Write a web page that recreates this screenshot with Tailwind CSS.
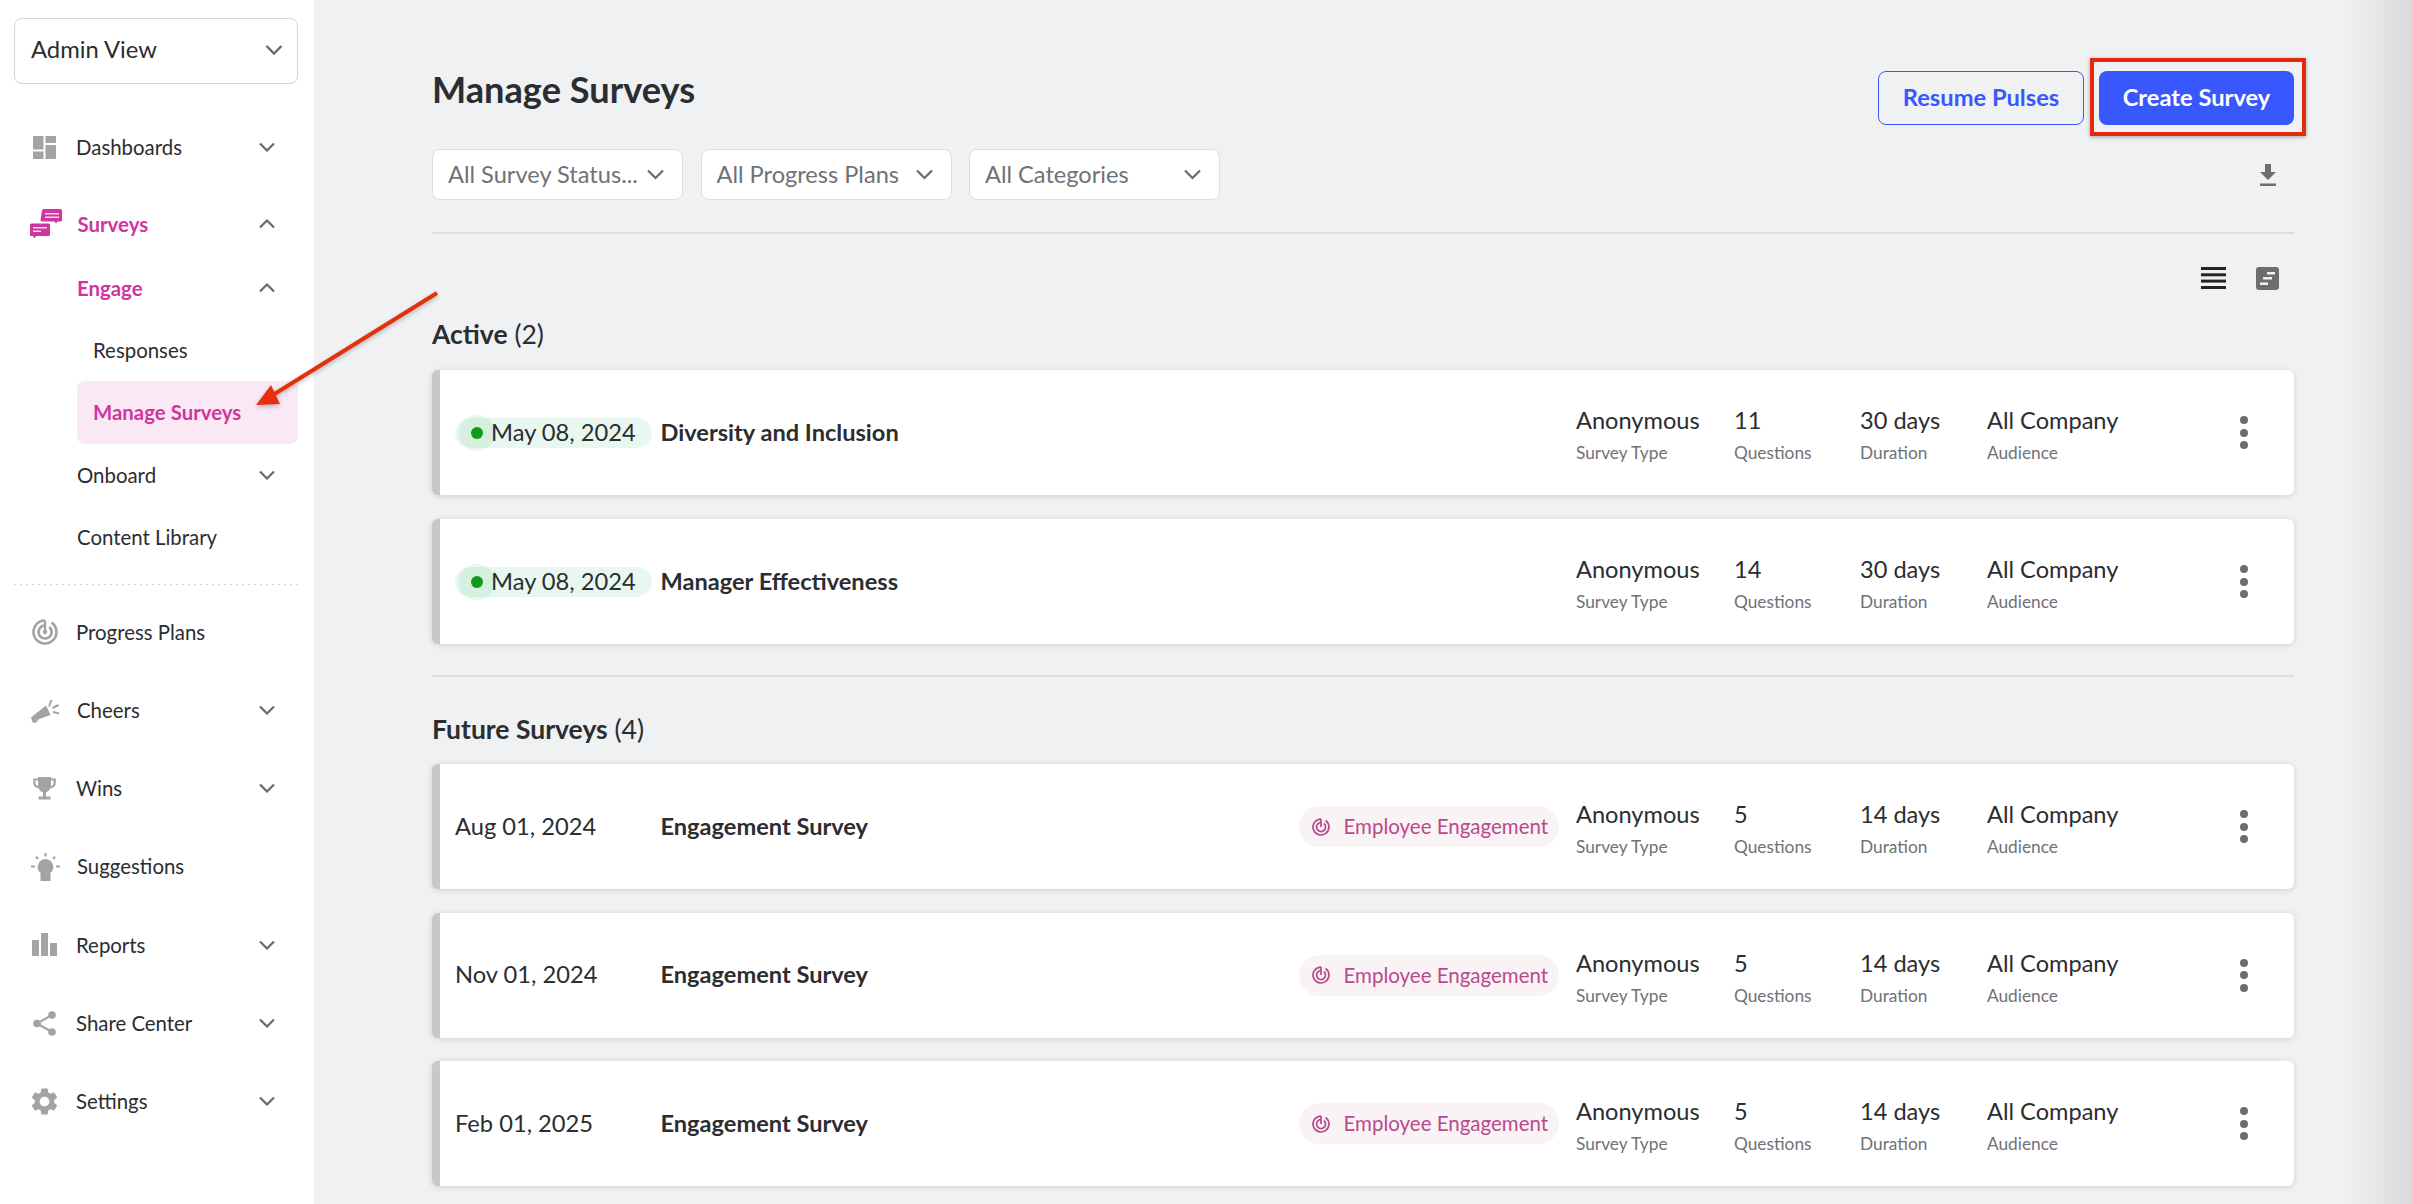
<!DOCTYPE html>
<html lang="en">
<head>
  <meta charset="UTF-8" />
  <title>Manage Surveys</title>
  <script src="https://cdn.jsdelivr.net/npm/@tailwindcss/browser@4"></script>
</head>
<body class="bg-[#eff1f3] font-['Lato',sans-serif] text-[#2b2d30] overflow-hidden">
<div class="relative flex h-[1204px] w-[2412px] overflow-hidden">

  <!-- SIDEBAR -->
  <aside class="w-[314px] shrink-0 bg-white px-[14px] pt-[18px]">
    <div class="flex h-[66px] w-[284px] items-center justify-between rounded-lg border border-[#d6d7da] pb-[2px] pl-[16px] pr-[14px] text-[23.800px]">
      <span>Admin View</span>
      <svg class="h-[12px] w-[18px]" viewBox="0 0 18 12" fill="none" stroke="#6a6a6a" stroke-width="2.400"><path d="M1.500 2l7.500 7.500L16.500 2"/></svg>
    </div>

    <nav class="mt-[24px] w-[284px] text-[20.400px]">
      <div class="flex h-[78px] items-center pl-[19px] pr-[23px]">
        <svg class="h-[23px] w-[23px] shrink-0" viewBox="0 0 23 23" fill="#a3a3a3"><rect width="10.500" height="13.500"/><rect y="15.500" width="10.500" height="7.500"/><rect x="12.500" width="10.500" height="7"/><rect x="12.500" y="9" width="10.500" height="14"/></svg>
        <span class="ml-[20px] flex-1">Dashboards</span>
        <svg class="h-[10px] w-[16px]" viewBox="0 0 16 10" fill="none" stroke="#6a6a6a" stroke-width="2.200"><path d="M1 1.500l7 7 7-7"/></svg>
      </div>

      <div class="mt-[7px] flex h-[62px] items-center pl-[16px] pr-[23px] font-bold text-[#d0359f]">
        <svg class="h-[30px] w-[32px] shrink-0" viewBox="0 0 32 30" fill="#d0359f">
          <path d="M12 1.500a1.500 1.500 0 0 1 1.500-1.500h17a1.500 1.500 0 0 1 1.500 1.500v9.500a1.500 1.500 0 0 1-1.500 1.500h-3l-1.500 2-1.500-2h-12.500a1.500 1.500 0 0 1-1.500-1.500z"/>
          <path d="M0 16a1.500 1.500 0 0 1 1.500-1.500h17a1.500 1.500 0 0 1 1.500 1.500v9.500a1.500 1.500 0 0 1-1.500 1.500h-12.500l-1.500 2.500-1.500-2.500h-2a1.500 1.500 0 0 1-1.500-1.500z"/>
          <path d="M15 4h14v1.500h-14zM15 7.500h14v1.500h-14zM3 18h14v1.500h-14zM3 21.500h8v1.500h-8z" fill="#f8d8ee"/>
        </svg>
        <span class="ml-[15.500px] flex-1">Surveys</span>
        <svg class="h-[10px] w-[16px]" viewBox="0 0 16 10" fill="none" stroke="#6a6a6a" stroke-width="2.200"><path d="M1 8.500l7-7 7 7"/></svg>
      </div>

      <div class="mt-[2px] flex h-[62px] items-center pl-[63px] pr-[23px] font-bold text-[#d0359f]">
        <span class="flex-1">Engage</span>
        <svg class="h-[10px] w-[16px]" viewBox="0 0 16 10" fill="none" stroke="#6a6a6a" stroke-width="2.200"><path d="M1 8.500l7-7 7 7"/></svg>
      </div>
      <div class="flex h-[62px] items-center pl-[79px]">Responses</div>
      <div class="ml-[63px] flex h-[63px] items-center rounded-lg bg-[#fae9f5] pl-[16px] font-bold text-[#d0359f]">Manage Surveys</div>
      <div class="flex h-[62px] items-center pl-[63px] pr-[23px]">
        <span class="flex-1">Onboard</span>
        <svg class="h-[10px] w-[16px]" viewBox="0 0 16 10" fill="none" stroke="#6a6a6a" stroke-width="2.200"><path d="M1 1.500l7 7 7-7"/></svg>
      </div>
      <div class="flex h-[62px] items-center pl-[63px]">Content Library</div>

      <div class="mt-[16px] mb-[8px] h-px bg-[repeating-linear-gradient(90deg,#d5d6d9_0_2px,transparent_2px_6px)]"></div>

      <div class="flex h-[78.200px] items-center pl-[18px] pr-[23px]">
        <svg class="h-[26px] w-[26px] shrink-0" viewBox="0 0 26 26" fill="none" stroke="#a3a3a3" stroke-width="2.600">
          <path d="M13 1.500A11.500 11.500 0 1 0 19.600 3.600"/>
          <path d="M13 6.500A6.500 6.500 0 1 0 17.200 8"/>
          <path d="M13 1.500V13" stroke-width="2.400"/>
          <circle cx="13" cy="13" r="2.200" fill="#a3a3a3" stroke="none"/>
        </svg>
        <span class="ml-[18px] flex-1">Progress Plans</span>
      </div>
      <div class="flex h-[78.200px] items-center pl-[17px] pr-[23px]">
        <svg class="h-[26px] w-[29px] shrink-0" viewBox="0 0 29 26" fill="#a3a3a3">
          <path d="M0 20.500l15-12 4.500 9.500-12 4.200c-.5 3-3.500 4.300-5.500 3-1.200-.8-1.600-2-1.400-3zM4.300 22.500c.3 1 1.600 1.300 2.300.4l-2.300-.4z"/>
          <path d="M18 9.500l2.500-6.500M21.500 11l6-3M22 15l6 1.500" fill="none" stroke="#a3a3a3" stroke-width="2"/>
        </svg>
        <span class="ml-[17px] flex-1">Cheers</span>
        <svg class="h-[10px] w-[16px]" viewBox="0 0 16 10" fill="none" stroke="#6a6a6a" stroke-width="2.200"><path d="M1 1.500l7 7 7-7"/></svg>
      </div>
      <div class="flex h-[78.200px] items-center pl-[19px] pr-[23px]">
        <svg class="h-[23px] w-[23px] shrink-0" viewBox="0 0 23 23" fill="#a3a3a3">
          <path d="M5 0h13v8.500c0 3.500-2.500 6.200-5 6.700v4.300h4.500v3h-12v-3h4.500v-4.300c-2.500-.5-5-3.200-5-6.700z"/>
          <path d="M5 2.500h-3.700v3c0 3 2 4.500 4.500 5M18 2.500h3.700v3c0 3-2 4.500-4.500 5" fill="none" stroke="#a3a3a3" stroke-width="2.200"/>
        </svg>
        <span class="ml-[20px] flex-1">Wins</span>
        <svg class="h-[10px] w-[16px]" viewBox="0 0 16 10" fill="none" stroke="#6a6a6a" stroke-width="2.200"><path d="M1 1.500l7 7 7-7"/></svg>
      </div>
      <div class="flex h-[78.200px] items-center pl-[17px] pr-[23px]">
        <svg class="h-[28px] w-[29px] shrink-0" viewBox="0 0 29 28" fill="#a3a3a3">
          <path d="M14.500 6a8 8 0 0 1 5 14v8h-10v-8a8 8 0 0 1 5-14z"/>
          <path d="M14.500 0v3.500M5 3.800l2 2M24 3.800l-2 2M0 13.500h4M25 13.500h4" fill="none" stroke="#a3a3a3" stroke-width="2.200"/>
        </svg>
        <span class="ml-[17px] flex-1">Suggestions</span>
      </div>
      <div class="flex h-[78.200px] items-center pl-[18px] pr-[23px]">
        <svg class="h-[23px] w-[25px] shrink-0" viewBox="0 0 25 23" fill="#a3a3a3"><rect y="7" width="7" height="16"/><rect x="9" width="7" height="23"/><rect x="18" y="10" width="7" height="13"/></svg>
        <span class="ml-[19px] flex-1">Reports</span>
        <svg class="h-[10px] w-[16px]" viewBox="0 0 16 10" fill="none" stroke="#6a6a6a" stroke-width="2.200"><path d="M1 1.500l7 7 7-7"/></svg>
      </div>
      <div class="flex h-[78.200px] items-center pl-[19px] pr-[23px]">
        <svg class="h-[25px] w-[23px] shrink-0" viewBox="0 0 23 25" fill="#a3a3a3">
          <circle cx="19" cy="4" r="3.800"/><circle cx="4" cy="12.500" r="3.800"/><circle cx="19" cy="21" r="3.800"/>
          <path d="M19 4L4 12.500L19 21" fill="none" stroke="#a3a3a3" stroke-width="2.200"/>
        </svg>
        <span class="ml-[20px] flex-1">Share Center</span>
        <svg class="h-[10px] w-[16px]" viewBox="0 0 16 10" fill="none" stroke="#6a6a6a" stroke-width="2.200"><path d="M1 1.500l7 7 7-7"/></svg>
      </div>
      <div class="flex h-[78.200px] items-center pl-[17px] pr-[23px]">
        <svg class="h-[27px] w-[27px] shrink-0" viewBox="2 2 20 20" fill="#a3a3a3"><path d="M19.140 12.940c.04-.3.06-.61.06-.94 0-.32-.02-.64-.07-.94l2.030-1.580c.18-.14.23-.41.12-.61l-1.920-3.320c-.12-.22-.37-.29-.59-.22l-2.390.96c-.5-.38-1.030-.7-1.620-.94l-.36-2.540c-.04-.24-.24-.41-.48-.41h-3.840c-.24 0-.43.17-.47.41l-.36 2.540c-.59.24-1.130.57-1.620.94l-2.390-.96c-.22-.08-.47 0-.59.22L2.740 8.870c-.12.21-.08.47.12.61l2.030 1.580c-.05.3-.09.63-.09.94s.02.64.07.94l-2.030 1.580c-.18.14-.23.41-.12.61l1.920 3.320c.12.22.37.29.59.22l2.390-.96c.5.38 1.030.7 1.620.94l.36 2.540c.05.24.24.41.48.41h3.840c.24 0 .44-.17.47-.41l.36-2.540c.59-.24 1.130-.56 1.620-.94l2.390.96c.22.08.47 0 .59-.22l1.920-3.320c.12-.22.07-.47-.12-.61l-2.010-1.580zM12 15.600c-1.980 0-3.600-1.620-3.600-3.600s1.620-3.600 3.600-3.600 3.600 1.620 3.600 3.600-1.620 3.600-3.600 3.600z"/></svg>
        <span class="ml-[18px] flex-1">Settings</span>
        <svg class="h-[10px] w-[16px]" viewBox="0 0 16 10" fill="none" stroke="#6a6a6a" stroke-width="2.200"><path d="M1 1.500l7 7 7-7"/></svg>
      </div>
    </nav>
  </aside>

  <!-- MAIN -->
  <main class="w-[1980px] shrink-0 pl-[118px] pt-[71px]">
    <div class="flex h-[54px] items-center justify-between">
      <h1 class="mt-[-17px] text-[36.200px] font-bold leading-none">Manage Surveys</h1>
      <div class="flex gap-[15px]">
        <button class="h-[54px] w-[206px] rounded-lg border border-[#3858fe] text-[23.700px] font-bold text-[#3858fe]">Resume Pulses</button>
        <button class="h-[54px] w-[195px] rounded-lg bg-[#3858fe] text-[23.700px] font-bold text-white">Create Survey</button>
      </div>
    </div>

    <div class="mt-[24px] flex h-[51px] items-center gap-[17.500px] text-[23.600px] text-[#6f7276]">
      <div class="flex h-[51px] w-[251px] items-center justify-between rounded-lg border border-[#dcdde0] bg-white pl-[15px] pr-[18px]">
        <span>All Survey Status...</span>
        <svg class="h-[11px] w-[17px]" viewBox="0 0 17 11" fill="none" stroke="#6a6a6a" stroke-width="2.200"><path d="M1 1.500l7.500 7.500 7.500-7.500"/></svg>
      </div>
      <div class="flex h-[51px] w-[251px] items-center justify-between rounded-lg border border-[#dcdde0] bg-white pl-[15px] pr-[18px]">
        <span>All Progress Plans</span>
        <svg class="h-[11px] w-[17px]" viewBox="0 0 17 11" fill="none" stroke="#6a6a6a" stroke-width="2.200"><path d="M1 1.500l7.500 7.500 7.500-7.500"/></svg>
      </div>
      <div class="flex h-[51px] w-[251px] items-center justify-between rounded-lg border border-[#dcdde0] bg-white pl-[15px] pr-[18px]">
        <span>All Categories</span>
        <svg class="h-[11px] w-[17px]" viewBox="0 0 17 11" fill="none" stroke="#6a6a6a" stroke-width="2.200"><path d="M1 1.500l7.500 7.500 7.500-7.500"/></svg>
      </div>
      <svg class="ml-auto mr-[17px] h-[22px] w-[18px]" viewBox="0 0 18 22" fill="#6d6d6d"><path d="M6 0h6v8h5l-8 8-8-8h5zM1 19.500h16v2.500h-16z"/></svg>
    </div>

    <div class="mt-[32px] border-t-2 border-[#dcdde0]"></div>

    <div class="mt-[33px] flex justify-end gap-[30px] pr-[15px]">
      <svg class="h-[22px] w-[25px]" viewBox="0 0 25 22" fill="#242424"><rect width="25" height="3"/><rect y="6.300" width="25" height="3"/><rect y="12.600" width="25" height="3"/><rect y="19" width="25" height="3"/></svg>
      <svg class="h-[23px] w-[23px]" viewBox="0 0 23 23"><rect width="23" height="23" rx="3" fill="#6d6d6d"/><path d="M11 5h8v2.500h-8zM7 10h9v2.500h-9zM4 15.500h8v2.500h-8z" fill="#eff1f3"/></svg>
    </div>

    <h2 class="mt-[28px] text-[26.500px] leading-[32px]"><span class="font-bold">Active</span> (2)</h2>

    <div class="mt-[20px] flex flex-col gap-[24px]">
      <div class="flex h-[125px] items-center rounded-md border-l-8 border-[#c8c8c8] bg-white pl-[15px] shadow-[0_1px_6px_rgba(0,0,0,0.14)]">
        <div class="w-[205.500px] shrink-0">
          <div class="flex h-[30px] w-[197px] items-center rounded-full bg-[#e8f8f1] pl-[4px] text-[23.700px]">
            <span class="flex h-[36px] w-[36px] shrink-0 items-center justify-center rounded-full bg-[#0f9a1a]/8"><span class="h-[12px] w-[12px] rounded-full bg-[#0f9a1a]"></span></span>
            <span class="ml-[-4px]">May 08, 2024</span>
          </div>
        </div>
        <div class="flex-1 text-[23.600px] font-bold">Diversity and Inclusion</div>
        <div class="w-[158px] shrink-0 pt-[5px]"><div class="text-[23.600px] leading-[30px]">Anonymous</div><div class="mt-[6px] text-[17.300px] leading-[24px] text-[#6f7276]">Survey Type</div></div>
        <div class="w-[126px] shrink-0 pt-[5px]"><div class="text-[23.600px] leading-[30px]">11</div><div class="mt-[6px] text-[17.300px] leading-[24px] text-[#6f7276]">Questions</div></div>
        <div class="w-[127px] shrink-0 pt-[5px]"><div class="text-[23.600px] leading-[30px]">30 days</div><div class="mt-[6px] text-[17.300px] leading-[24px] text-[#6f7276]">Duration</div></div>
        <div class="w-[253px] shrink-0 pt-[5px]"><div class="text-[23.600px] leading-[30px]">All Company</div><div class="mt-[6px] text-[17.300px] leading-[24px] text-[#6f7276]">Audience</div></div>
        <div class="mr-[46px] flex w-[8px] flex-col gap-[4.500px]"><span class="h-[8px] w-[8px] rounded-full bg-[#6d6d6d]"></span><span class="h-[8px] w-[8px] rounded-full bg-[#6d6d6d]"></span><span class="h-[8px] w-[8px] rounded-full bg-[#6d6d6d]"></span></div>
      </div>
      <div class="flex h-[125px] items-center rounded-md border-l-8 border-[#c8c8c8] bg-white pl-[15px] shadow-[0_1px_6px_rgba(0,0,0,0.14)]">
        <div class="w-[205.500px] shrink-0">
          <div class="flex h-[30px] w-[197px] items-center rounded-full bg-[#e8f8f1] pl-[4px] text-[23.700px]">
            <span class="flex h-[36px] w-[36px] shrink-0 items-center justify-center rounded-full bg-[#0f9a1a]/8"><span class="h-[12px] w-[12px] rounded-full bg-[#0f9a1a]"></span></span>
            <span class="ml-[-4px]">May 08, 2024</span>
          </div>
        </div>
        <div class="flex-1 text-[23.600px] font-bold">Manager Effectiveness</div>
        <div class="w-[158px] shrink-0 pt-[5px]"><div class="text-[23.600px] leading-[30px]">Anonymous</div><div class="mt-[6px] text-[17.300px] leading-[24px] text-[#6f7276]">Survey Type</div></div>
        <div class="w-[126px] shrink-0 pt-[5px]"><div class="text-[23.600px] leading-[30px]">14</div><div class="mt-[6px] text-[17.300px] leading-[24px] text-[#6f7276]">Questions</div></div>
        <div class="w-[127px] shrink-0 pt-[5px]"><div class="text-[23.600px] leading-[30px]">30 days</div><div class="mt-[6px] text-[17.300px] leading-[24px] text-[#6f7276]">Duration</div></div>
        <div class="w-[253px] shrink-0 pt-[5px]"><div class="text-[23.600px] leading-[30px]">All Company</div><div class="mt-[6px] text-[17.300px] leading-[24px] text-[#6f7276]">Audience</div></div>
        <div class="mr-[46px] flex w-[8px] flex-col gap-[4.500px]"><span class="h-[8px] w-[8px] rounded-full bg-[#6d6d6d]"></span><span class="h-[8px] w-[8px] rounded-full bg-[#6d6d6d]"></span><span class="h-[8px] w-[8px] rounded-full bg-[#6d6d6d]"></span></div>
      </div>
    </div>

    <div class="mt-[31px] border-t-2 border-[#dcdde0]"></div>

    <h2 class="mt-[36px] text-[26.500px] leading-[32px]"><span class="font-bold">Future Surveys</span> (4)</h2>

    <div class="mt-[19px] flex flex-col gap-[23.500px]">
      <div class="flex h-[125px] items-center rounded-md border-l-8 border-[#c8c8c8] bg-white pl-[15px] shadow-[0_1px_6px_rgba(0,0,0,0.14)]">
        <div class="w-[205.500px] shrink-0 text-[23.700px]">Aug 01, 2024</div>
        <div class="flex-1 text-[23.600px] font-bold">Engagement Survey</div>
        <div class="mr-[17px] flex h-[41px] w-[260px] items-center rounded-full bg-[#faf3f6] pl-[13px] text-[20.500px] text-[#b94a8c]">
          <svg class="h-[18px] w-[18px] shrink-0" viewBox="0 0 26 26" fill="none" stroke="#b94a8c" stroke-width="2.500"><path d="M13 1.500A11.500 11.500 0 1 0 19.600 3.600"/><path d="M13 6.500A6.500 6.500 0 1 0 17.200 8"/><path d="M13 1.500V13"/></svg>
          <span class="ml-[13.500px]">Employee Engagement</span>
        </div>
        <div class="w-[158px] shrink-0 pt-[5px]"><div class="text-[23.600px] leading-[30px]">Anonymous</div><div class="mt-[6px] text-[17.300px] leading-[24px] text-[#6f7276]">Survey Type</div></div>
        <div class="w-[126px] shrink-0 pt-[5px]"><div class="text-[23.600px] leading-[30px]">5</div><div class="mt-[6px] text-[17.300px] leading-[24px] text-[#6f7276]">Questions</div></div>
        <div class="w-[127px] shrink-0 pt-[5px]"><div class="text-[23.600px] leading-[30px]">14 days</div><div class="mt-[6px] text-[17.300px] leading-[24px] text-[#6f7276]">Duration</div></div>
        <div class="w-[253px] shrink-0 pt-[5px]"><div class="text-[23.600px] leading-[30px]">All Company</div><div class="mt-[6px] text-[17.300px] leading-[24px] text-[#6f7276]">Audience</div></div>
        <div class="mr-[46px] flex w-[8px] flex-col gap-[4.500px]"><span class="h-[8px] w-[8px] rounded-full bg-[#6d6d6d]"></span><span class="h-[8px] w-[8px] rounded-full bg-[#6d6d6d]"></span><span class="h-[8px] w-[8px] rounded-full bg-[#6d6d6d]"></span></div>
      </div>
      <div class="flex h-[125px] items-center rounded-md border-l-8 border-[#c8c8c8] bg-white pl-[15px] shadow-[0_1px_6px_rgba(0,0,0,0.14)]">
        <div class="w-[205.500px] shrink-0 text-[23.700px]">Nov 01, 2024</div>
        <div class="flex-1 text-[23.600px] font-bold">Engagement Survey</div>
        <div class="mr-[17px] flex h-[41px] w-[260px] items-center rounded-full bg-[#faf3f6] pl-[13px] text-[20.500px] text-[#b94a8c]">
          <svg class="h-[18px] w-[18px] shrink-0" viewBox="0 0 26 26" fill="none" stroke="#b94a8c" stroke-width="2.500"><path d="M13 1.500A11.500 11.500 0 1 0 19.600 3.600"/><path d="M13 6.500A6.500 6.500 0 1 0 17.200 8"/><path d="M13 1.500V13"/></svg>
          <span class="ml-[13.500px]">Employee Engagement</span>
        </div>
        <div class="w-[158px] shrink-0 pt-[5px]"><div class="text-[23.600px] leading-[30px]">Anonymous</div><div class="mt-[6px] text-[17.300px] leading-[24px] text-[#6f7276]">Survey Type</div></div>
        <div class="w-[126px] shrink-0 pt-[5px]"><div class="text-[23.600px] leading-[30px]">5</div><div class="mt-[6px] text-[17.300px] leading-[24px] text-[#6f7276]">Questions</div></div>
        <div class="w-[127px] shrink-0 pt-[5px]"><div class="text-[23.600px] leading-[30px]">14 days</div><div class="mt-[6px] text-[17.300px] leading-[24px] text-[#6f7276]">Duration</div></div>
        <div class="w-[253px] shrink-0 pt-[5px]"><div class="text-[23.600px] leading-[30px]">All Company</div><div class="mt-[6px] text-[17.300px] leading-[24px] text-[#6f7276]">Audience</div></div>
        <div class="mr-[46px] flex w-[8px] flex-col gap-[4.500px]"><span class="h-[8px] w-[8px] rounded-full bg-[#6d6d6d]"></span><span class="h-[8px] w-[8px] rounded-full bg-[#6d6d6d]"></span><span class="h-[8px] w-[8px] rounded-full bg-[#6d6d6d]"></span></div>
      </div>
      <div class="flex h-[125px] items-center rounded-md border-l-8 border-[#c8c8c8] bg-white pl-[15px] shadow-[0_1px_6px_rgba(0,0,0,0.14)]">
        <div class="w-[205.500px] shrink-0 text-[23.700px]">Feb 01, 2025</div>
        <div class="flex-1 text-[23.600px] font-bold">Engagement Survey</div>
        <div class="mr-[17px] flex h-[41px] w-[260px] items-center rounded-full bg-[#faf3f6] pl-[13px] text-[20.500px] text-[#b94a8c]">
          <svg class="h-[18px] w-[18px] shrink-0" viewBox="0 0 26 26" fill="none" stroke="#b94a8c" stroke-width="2.500"><path d="M13 1.500A11.500 11.500 0 1 0 19.600 3.600"/><path d="M13 6.500A6.500 6.500 0 1 0 17.200 8"/><path d="M13 1.500V13"/></svg>
          <span class="ml-[13.500px]">Employee Engagement</span>
        </div>
        <div class="w-[158px] shrink-0 pt-[5px]"><div class="text-[23.600px] leading-[30px]">Anonymous</div><div class="mt-[6px] text-[17.300px] leading-[24px] text-[#6f7276]">Survey Type</div></div>
        <div class="w-[126px] shrink-0 pt-[5px]"><div class="text-[23.600px] leading-[30px]">5</div><div class="mt-[6px] text-[17.300px] leading-[24px] text-[#6f7276]">Questions</div></div>
        <div class="w-[127px] shrink-0 pt-[5px]"><div class="text-[23.600px] leading-[30px]">14 days</div><div class="mt-[6px] text-[17.300px] leading-[24px] text-[#6f7276]">Duration</div></div>
        <div class="w-[253px] shrink-0 pt-[5px]"><div class="text-[23.600px] leading-[30px]">All Company</div><div class="mt-[6px] text-[17.300px] leading-[24px] text-[#6f7276]">Audience</div></div>
        <div class="mr-[46px] flex w-[8px] flex-col gap-[4.500px]"><span class="h-[8px] w-[8px] rounded-full bg-[#6d6d6d]"></span><span class="h-[8px] w-[8px] rounded-full bg-[#6d6d6d]"></span><span class="h-[8px] w-[8px] rounded-full bg-[#6d6d6d]"></span></div>
      </div>
    </div>
  </main>

  <!-- edge shadow on the right of the page -->
  <div class="absolute inset-y-0 right-0 w-[72px] bg-gradient-to-r from-transparent to-[#dadbdd]"></div>

  <!-- annotations drawn on top of the screenshot -->
  <div class="absolute left-[2090px] top-[58px] h-[78px] w-[216px] border-[4px] border-[#e32b0c] shadow-[0_1px_4px_rgba(0,0,0,0.35)]"></div>
  <svg class="absolute left-0 top-0 h-[1204px] w-[2412px] pointer-events-none drop-shadow-[0_2px_2px_rgba(0,0,0,0.25)]" viewBox="0 0 2412 1204" fill="none">
    <path d="M437 293L268 398" stroke="#e5300f" stroke-width="4"/>
    <path d="M256 405L271 385L280 404z" fill="#e5300f"/>
  </svg>
</div>
</body>
</html>
